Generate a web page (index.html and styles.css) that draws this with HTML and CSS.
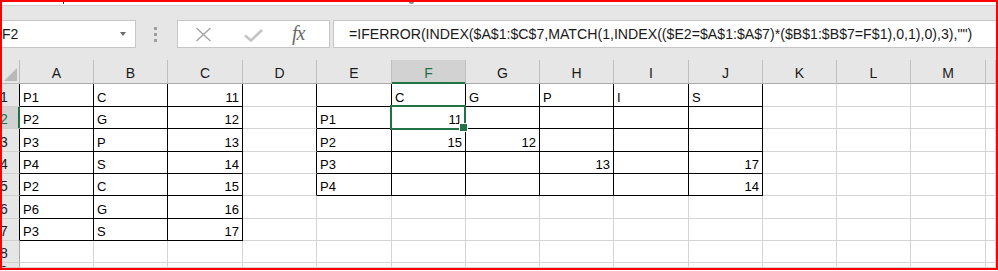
FILE: index.html
```html
<!DOCTYPE html>
<html>
<head>
<meta charset="utf-8">
<link rel="stylesheet" href="styles.css">
</head>
<body>
<div class="frame">
  <div class="topstrip"><span class="tick t1"></span><span class="tick t2"></span></div>
  <div class="toolbar">
    <div class="namebox"><span class="ref">F2</span><span class="caret"></span></div>
    <div class="dots"><i></i><i></i><i></i></div>
    <div class="fbtns">
      <svg class="ic-x" width="17" height="15" viewBox="0 0 17 15"><path d="M1.5 1 L15.5 14 M15.5 1 L1.5 14" stroke="#a3a3a3" stroke-width="1.4" fill="none"/></svg>
      <svg class="ic-ok" width="19" height="13" viewBox="0 0 19 13"><path d="M1 6.5 L7 11.5 L18 1" stroke="#c4c4c4" stroke-width="2.6" fill="none"/></svg>
      <span class="fx">fx</span>
    </div>
    <div class="fbar">=IFERROR(INDEX($A$1:$C$7,MATCH(1,INDEX(($E2=$A$1:$A$7)*($B$1:$B$7=F$1),0,1),0),3),"")</div>
  </div>
  <div class="sheet">
    <div class="corner"><div class="tri"></div></div>
    <div class="hd">A</div><div class="hd">B</div><div class="hd">C</div><div class="hd">D</div><div class="hd">E</div><div class="hd hsel">F</div><div class="hd">G</div><div class="hd">H</div><div class="hd">I</div><div class="hd">J</div><div class="hd">K</div><div class="hd">L</div><div class="hd">M</div><div class="hd"></div>

    <div class="rh bl"><span>1</span></div>
    <div class="c bk">P1</div><div class="c bk">C</div><div class="c bk n">11</div><div class="c bl"></div>
    <div class="c bk"></div><div class="c bk">C</div><div class="c bk">G</div><div class="c bk">P</div><div class="c bk">I</div><div class="c bk">S</div>
    <div class="c"></div><div class="c"></div><div class="c"></div><div class="c"></div>

    <div class="rh rsel"><span>2</span></div>
    <div class="c bk">P2</div><div class="c bk">G</div><div class="c bk n">12</div><div class="c bl"></div>
    <div class="c bk">P1</div><div class="c bk n sel">11</div><div class="c bk"></div><div class="c bk"></div><div class="c bk"></div><div class="c bk"></div>
    <div class="c"></div><div class="c"></div><div class="c"></div><div class="c"></div>

    <div class="rh bl"><span>3</span></div>
    <div class="c bk">P3</div><div class="c bk">P</div><div class="c bk n">13</div><div class="c bl"></div>
    <div class="c bk">P2</div><div class="c bk n">15</div><div class="c bk n">12</div><div class="c bk"></div><div class="c bk"></div><div class="c bk"></div>
    <div class="c"></div><div class="c"></div><div class="c"></div><div class="c"></div>

    <div class="rh bl"><span>4</span></div>
    <div class="c bk">P4</div><div class="c bk">S</div><div class="c bk n">14</div><div class="c bl"></div>
    <div class="c bk">P3</div><div class="c bk"></div><div class="c bk"></div><div class="c bk n">13</div><div class="c bk"></div><div class="c bk n">17</div>
    <div class="c"></div><div class="c"></div><div class="c"></div><div class="c"></div>

    <div class="rh bl"><span>5</span></div>
    <div class="c bk">P2</div><div class="c bk">C</div><div class="c bk n">15</div><div class="c bl"></div>
    <div class="c bk">P4</div><div class="c bk"></div><div class="c bk"></div><div class="c bk"></div><div class="c bk"></div><div class="c bk n">14</div>
    <div class="c"></div><div class="c"></div><div class="c"></div><div class="c"></div>

    <div class="rh bl"><span>6</span></div>
    <div class="c bk">P6</div><div class="c bk">G</div><div class="c bk n">16</div><div class="c"></div>
    <div class="c"></div><div class="c"></div><div class="c"></div><div class="c"></div><div class="c"></div><div class="c"></div>
    <div class="c"></div><div class="c"></div><div class="c"></div><div class="c"></div>

    <div class="rh bl"><span>7</span></div>
    <div class="c bk">P3</div><div class="c bk">S</div><div class="c bk n">17</div><div class="c"></div>
    <div class="c"></div><div class="c"></div><div class="c"></div><div class="c"></div><div class="c"></div><div class="c"></div>
    <div class="c"></div><div class="c"></div><div class="c"></div><div class="c"></div>

    <div class="rh"><span>8</span></div>
    <div class="c"></div><div class="c"></div><div class="c"></div><div class="c"></div>
    <div class="c"></div><div class="c"></div><div class="c"></div><div class="c"></div><div class="c"></div><div class="c"></div>
    <div class="c"></div><div class="c"></div><div class="c"></div><div class="c"></div>

    <div class="rh rlast"><span>9</span></div>
    <div class="c"></div><div class="c"></div><div class="c"></div><div class="c"></div>
    <div class="c"></div><div class="c"></div><div class="c"></div><div class="c"></div><div class="c"></div><div class="c"></div>
    <div class="c"></div><div class="c"></div><div class="c"></div><div class="c"></div>
  </div>
</div>
</body>
</html>
```

FILE: styles.css
```css
* { box-sizing: border-box; }
html, body { margin: 0; padding: 0; background: #ffffff; }
body { width: 998px; height: 271px; overflow: hidden; font-family: "Liberation Sans", Arial, sans-serif; }

.frame {
  width: 998px;
  height: 270px;
  border: 2px solid #ff0000;
  display: flex;
  flex-direction: column;
  overflow: hidden;
  background: #ffffff;
}

.topstrip {
  height: 4px;
  flex: none;
  background: #ffffff;
  border-bottom: 1px solid #d0d0d0;
  display: flex;
  align-items: flex-start;
}
.tick { display: block; background: #3a3a3a; }
.t1 { width: 1px; height: 2px; margin-left: 61px; }
.t2 { width: 5px; height: 2px; margin-left: 345px; background: #8a8a8a; border-radius: 0 0 3px 3px; }

.toolbar {
  height: 54px;
  flex: none;
  background: #e6e6e6;
  display: flex;
  align-items: flex-start;
  padding-top: 14px;
}
.namebox {
  width: 134px;
  height: 28px;
  background: #ffffff;
  border: 1px solid #c6c6c6;
  border-left: none;
  display: flex;
  align-items: center;
  justify-content: space-between;
  padding: 0 9px 0 0;
}
.ref { font-size: 14px; color: #1a1a1a; margin-left: 0; }
.caret {
  width: 0; height: 0;
  border-left: 3.5px solid transparent;
  border-right: 3.5px solid transparent;
  border-top: 4px solid #6a6a6a;
}
.dots {
  margin-left: 18px;
  margin-top: 7px;
  display: flex;
  flex-direction: column;
  gap: 3px;
}
.dots i { display: block; width: 3px; height: 3px; background: #9e9e9e; }

.fbtns {
  margin-left: 20px;
  width: 153px;
  height: 28px;
  background: #ffffff;
  border: 1px solid #c6c6c6;
  display: flex;
  align-items: center;
}
.ic-x { margin-left: 17px; margin-top: 1px; }
.ic-ok { margin-left: 32px; margin-top: 2px; }
.fx {
  margin-left: 29px;
  font-family: "Liberation Serif", "Times New Roman", serif;
  font-style: italic;
  font-size: 20px;
  color: #6a6a6a;
  letter-spacing: -1px;
  margin-top: -1px;
}
.fbar {
  margin-left: 3px;
  flex: 1;
  height: 28px;
  background: #ffffff;
  border: 1px solid #c6c6c6;
  border-right: none;
  display: flex;
  align-items: center;
  padding-left: 15px;
  font-size: 14.15px;
  color: #1a1a1a;
  white-space: nowrap;
  overflow: hidden;
}

.sheet {
  flex: 1;
  display: grid;
  grid-template-columns: 18px 74px 74px 75px 74px 75px 74px 74px 74px 75px 74px 74px 74px 75px 1fr;
  grid-template-rows: 24px 23px 22px 23px 22px 22px 23px 22px 22px 1fr;
  overflow: hidden;
}

.corner {
  background: #e6e6e6;
  border-right: 1px solid #bcbcbc;
  border-bottom: 1px solid #bcbcbc;
  display: flex;
  justify-content: flex-end;
  align-items: flex-end;
  padding: 0 2px 2px 0;
}
.tri {
  width: 13px; height: 13px;
  background: #b9b9b9;
  clip-path: polygon(100% 0, 100% 100%, 0 100%);
}

.hd {
  background: #e6e6e6;
  border-right: 1px solid #bfbfbf;
  border-bottom: 1px solid #ababab;
  display: flex;
  align-items: center;
  justify-content: center;
  font-size: 14px;
  color: #1a1a1a;
  padding-top: 2px;
}
.hsel {
  background: #d2d2d2;
  color: #217346;
  border-bottom: 1px solid #217346;
  box-shadow: inset 0 -1px 0 #217346;
}

.rh {
  background: #e6e6e6;
  border-right: 1px solid #ababab;
  border-bottom: 1px solid #cfcfcf;
  display: flex;
  justify-content: flex-end;
  align-items: flex-end;
  overflow: hidden;
  font-size: 14px;
  line-height: 17px;
  color: #1a1a1a;
}
.rh span { flex: none; width: 30px; text-align: center; }
.rh.bl { border-right-color: #000000; }
.rh.rlast { align-items: flex-start; }
.rsel {
  background: #d2d2d2;
  color: #217346;
  border-right-color: #217346;
  box-shadow: inset -1px 0 0 #217346;
}

.c {
  border-right: 1px solid #d4d4d4;
  border-bottom: 1px solid #d4d4d4;
  display: flex;
  align-items: flex-end;
  padding: 0 3px 0 3px;
  font-size: 13px;
  line-height: 16px;
  color: #000000;
  white-space: nowrap;
}
.c.n { justify-content: flex-end; }
.c.bk { border-right-color: #000000; border-bottom-color: #000000; }
.c.bl { border-right-color: #000000; }

.sel { position: relative; }
.sel::before {
  content: "";
  position: absolute;
  left: -2px; top: -2px; right: -1px; bottom: -2px;
  border: 2px solid #217346;
  pointer-events: none;
}
.sel::after {
  content: "";
  position: absolute;
  right: -3px; bottom: -4px;
  width: 7px; height: 7px;
  background: #217346;
  border: 1px solid #ffffff;
}
```
